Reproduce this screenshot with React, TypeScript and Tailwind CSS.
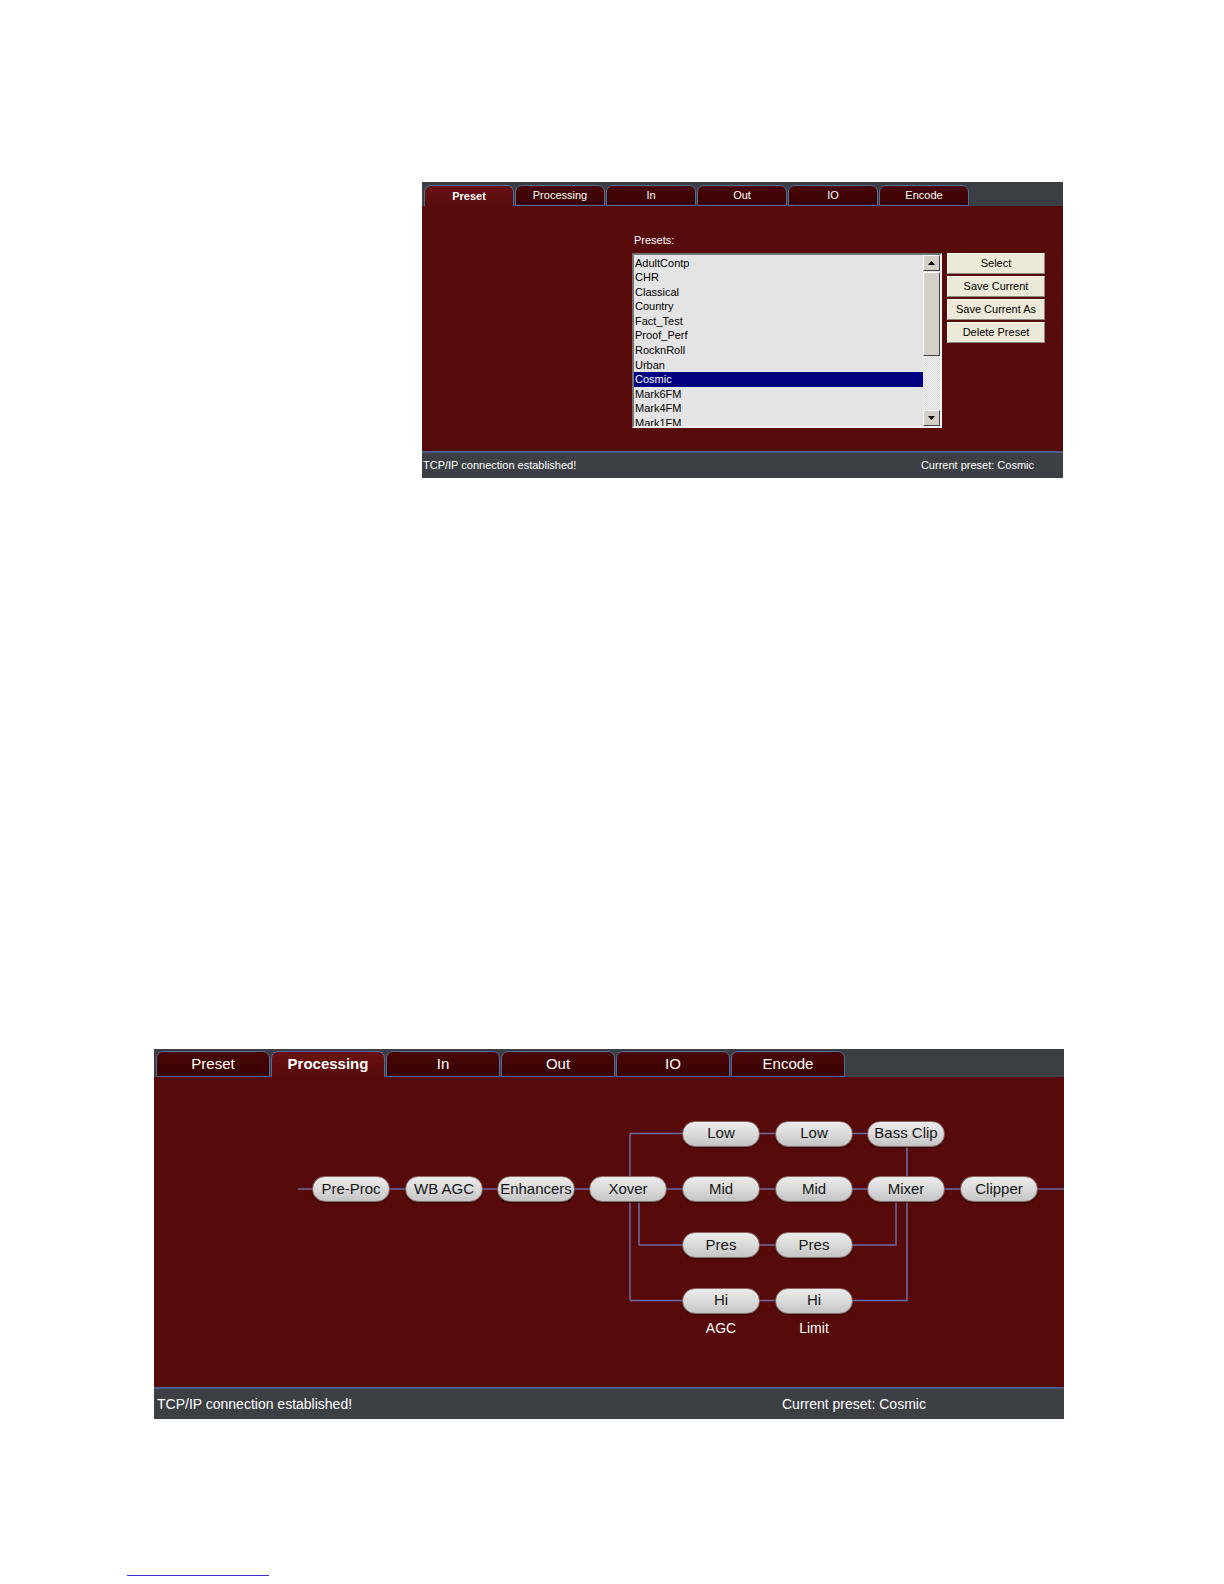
const topTabs = ['Preset', 'Processing', 'In', 'Out', 'IO', 'Encode'];

const presets = [
  'AdultContp',
  'CHR',
  'Classical',
  'Country',
  'Fact_Test',
  'Proof_Perf',
  'RocknRoll',
  'Urban',
  'Cosmic',
  'Mark6FM',
  'Mark4FM',
  'Mark1FM',
];

const presetButtons = ['Select', 'Save Current', 'Save Current As', 'Delete Preset'];

// diagram nodes, centre coordinates inside the processing canvas
const nodes = [
  { label: 'Pre-Proc', x: 197, y: 112 },
  { label: 'WB AGC', x: 290, y: 112 },
  { label: 'Enhancers', x: 382, y: 112 },
  { label: 'Xover', x: 474, y: 112 },
  { label: 'Low', x: 567, y: 56.5 },
  { label: 'Low', x: 660, y: 56.5 },
  { label: 'Bass Clip', x: 752, y: 56.5 },
  { label: 'Mid', x: 567, y: 112 },
  { label: 'Mid', x: 660, y: 112 },
  { label: 'Mixer', x: 752, y: 112 },
  { label: 'Clipper', x: 845, y: 112 },
  { label: 'Pres', x: 567, y: 168 },
  { label: 'Pres', x: 660, y: 168 },
  { label: 'Hi', x: 567, y: 223.5 },
  { label: 'Hi', x: 660, y: 223.5 },
];

const captions = [
  { label: 'AGC', x: 567, y: 251 },
  { label: 'Limit', x: 660, y: 251 },
];

function Tab({ label, active, big }: { label: string; active: boolean; big?: boolean }) {
  return (
    <div
      className={
        'flex items-center justify-center rounded-t-[7px] border border-[#56679a] text-white ' +
        (big ? 'w-[114px] h-[26px] text-[15px] ' : 'w-[90px] h-[21px] text-[11px] ') +
        (active
          ? 'border-b-0 bg-gradient-to-b from-[#6a1212] to-[#570a0a] font-bold'
          : 'bg-gradient-to-b from-[#4a0606] to-[#380202]')
      }
    >
      {label}
    </div>
  );
}

function PresetPanel() {
  return (
    <div className="w-[641px] font-['Liberation_Sans',Arial,sans-serif]">
      <div className="flex h-[24px] items-end gap-[1px] bg-[#3b3e42] pl-[2px]">
        {topTabs.map((t) => (
          <Tab key={t} label={t} active={t === 'Preset'} />
        ))}
      </div>
      <div className="h-[245px] bg-[#570a0a] pl-[210px] pt-[27px]">
        <div className="h-[14px] pl-[2px] text-[11px] leading-[14px] text-white">Presets:</div>
        <div className="mt-[6px] flex gap-[5px]">
          <div className="flex h-[175px] w-[310px] border-2 border-t-[#707070] border-l-[#707070] border-b-[#f4f4f4] border-r-[#f4f4f4] bg-[#e4e4e4]">
            <div className="flex-1 overflow-hidden pt-[0.5px]">
              {presets.map((p) => (
                <div
                  key={p}
                  className={
                    'h-[14.58px] pl-[1px] text-[11px] leading-[14.58px] ' +
                    (p === 'Cosmic' ? 'bg-[#000080] text-white' : 'text-black')
                  }
                >
                  {p}
                </div>
              ))}
            </div>
            <div className="flex w-[17px] flex-col bg-[repeating-conic-gradient(#f0f0f0_0_25%,#dcdcdc_0_50%)] bg-[length:2px_2px]">
              <div className="flex h-[16px] items-center justify-center border border-t-white border-l-white border-r-[#404040] border-b-[#404040] bg-[#d4d0c8]">
                <svg width="7" height="4" viewBox="0 0 7 4">
                  <path d="M0 4 L3.5 0 L7 4 Z" fill="#000" />
                </svg>
              </div>
              <div className="mt-[1px] h-[84px] border border-t-white border-l-white border-r-[#404040] border-b-[#404040] bg-[#d4d0c8]" />
              <div className="flex-1" />
              <div className="flex h-[16px] items-center justify-center border border-t-white border-l-white border-r-[#404040] border-b-[#404040] bg-[#d4d0c8]">
                <svg width="7" height="4" viewBox="0 0 7 4">
                  <path d="M0 0 L3.5 4 L7 0 Z" fill="#000" />
                </svg>
              </div>
            </div>
          </div>
          <div className="flex flex-col gap-[2px]">
            {presetButtons.map((b) => (
              <div
                key={b}
                className="flex h-[21px] w-[98px] items-center justify-center border border-t-[#fbfaf4] border-l-[#fbfaf4] border-r-[#8c8a80] border-b-[#8c8a80] bg-[#ece9d8] text-[11px] text-black"
              >
                {b}
              </div>
            ))}
          </div>
        </div>
      </div>
      <div className="flex h-[27px] items-center justify-between border-t-2 border-[#4d5d8e] bg-[#3c3f43] pl-[1px] pr-[29px] text-[11px] text-white">
        <span>TCP/IP connection established!</span>
        <span>Current preset: Cosmic</span>
      </div>
    </div>
  );
}

function ProcessingPanel() {
  return (
    <div className="w-[910px] font-['Liberation_Sans',Arial,sans-serif]">
      <div className="flex h-[28px] items-end gap-[1px] bg-[#3b3e42] pl-[2px]">
        {topTabs.map((t) => (
          <Tab key={t} label={t} active={t === 'Processing'} big />
        ))}
      </div>
      <div className="relative h-[310px] bg-[#570a0a]">
        <svg className="absolute left-0 top-0" width="910" height="310" viewBox="0 0 910 310">
          <g fill="none" stroke="#6d6ca4" strokeWidth="1.5">
            <path d="M144 112 H910" />
            <path d="M476 56.5 V223.5" />
            <path d="M485 112 V168" />
            <path d="M476 56.5 H752" />
            <path d="M485 168 H742 V112" />
            <path d="M476 223.5 H753 V56.5" />
          </g>
        </svg>
        {nodes.map((n, i) => (
          <div
            key={i}
            className="absolute flex h-[26px] w-[78px] items-center justify-center rounded-full border border-[#8a6666] bg-gradient-to-b from-[#ececec] via-[#dadada] to-[#c4c4c4] text-[15px] text-[#161616] shadow-[0_1px_1px_rgba(0,0,0,0.5)]"
            style={{ left: n.x - 39, top: n.y - 13 }}
          >
            {n.label}
          </div>
        ))}
        {captions.map((c) => (
          <div
            key={c.label}
            className="absolute w-[78px] text-center text-[14px] leading-[16px] text-white"
            style={{ left: c.x - 39, top: c.y - 8 }}
          >
            {c.label}
          </div>
        ))}
      </div>
      <div className="flex h-[32px] items-center border-t-2 border-[#4d5d8e] bg-[#3c3f43] pl-[3px] text-[14px] text-white">
        <span className="w-[625px]">TCP/IP connection established!</span>
        <span>Current preset: Cosmic</span>
      </div>
    </div>
  );
}

export default function App() {
  return (
    <div className="min-h-[1584px] w-[1224px] bg-white">
      <div className="pl-[422px] pt-[182px]">
        <PresetPanel />
      </div>
      <div className="mt-[571px] pl-[154px]">
        <ProcessingPanel />
      </div>
      <div className="ml-[127px] mt-[156px] w-[142px] border-t border-[#3333cc]" />
    </div>
  );
}
